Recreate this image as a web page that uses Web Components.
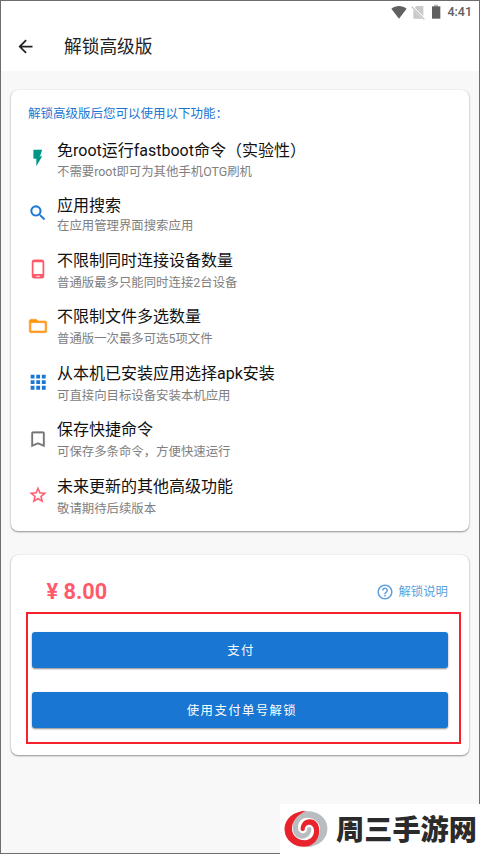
<!DOCTYPE html>
<html lang="zh-CN"><head><meta charset="utf-8"><title>解锁高级版</title>
<style>html,body{margin:0;height:100%;overflow:hidden}body{font-family:Roboto,"Noto Sans CJK SC",sans-serif}</style></head>
<body><unlock-page></unlock-page>
<script>
const icons={
wifi:'<path fill="#606060" d="M12 22L.5 7.2C4 4.3 8 3 12 3s8 1.3 11.500 4.200z"/>',
nosim:'<path fill="#c9c9c9" d="M10 3h10v15.500L7.200 5.700zM5 8.200V22h13.800z"/><path stroke="#bdbdbd" stroke-width="1.800" d="M2.500 4l19 19"/>',
battery:'<path fill="#bbb" d="M9 1h6v4H9z"/><path fill="#606060" d="M6 3.500h12.500V22H6z"/>',
back:'<path fill="#222" d="M20 11H7.830l5.590-5.590L12 4l-8 8 8 8 1.410-1.410L7.830 13H20v-2z"/>',
bolt:'<path fill="#009688" d="M6.500 2v11h3.500v9l7-12h-4V2z"/><path fill="#009688" d="M12 2h5l-2.500 8H12z"/>',
search:'<path fill="#1976d2" stroke="#1976d2" stroke-width=".3" d="M15.5 14h-.79l-.28-.27C15.41 12.59 16 11.11 16 9.5 16 5.91 13.09 3 9.5 3S3 5.91 3 9.5 5.91 16 9.5 16c1.61 0 3.09-.59 4.23-1.57l.27.28v.79l5 4.99L20.49 19l-4.99-5zm-6 0C7.01 14 5 11.99 5 9.5S7.01 5 9.5 5 14 7.01 14 9.5 11.99 14 9.5 14z"/>',
phone:'<path fill="#ff5a6b" fill-rule="evenodd" d="M7.500 .5h9a3 3 0 0 1 3 3v17a3 3 0 0 1-3 3h-9a3 3 0 0 1-3-3v-17a3 3 0 0 1 3-3zM6.600 4v14h10.800V4zM10 20v1.200h4V20z"/>',
folder:'<path fill="#ff9800" stroke="#ff9d3a" stroke-width=".8" d="M20.500 6H12l-2-2H3.500c-1.100 0-2 .9-2 2v12c0 1.100.9 2 2 2h17c1.100 0 2-.9 2-2V8c0-1.100-.9-2-2-2zm0 12h-17V8h17v10z"/>',
apps:'<path fill="#1976d2" d="M3.200 3.200h4.600v4.600H3.200zm6.700 0h4.600v4.600H9.900zm6.700 0h4.600v4.600h-4.600zM3.200 9.900h4.600v4.600H3.200zm6.700 0h4.600v4.600H9.900zm6.700 0h4.600v4.600h-4.600zM3.200 16.600h4.600v4.600H3.200zm6.700 0h4.600v4.600H9.900zm6.700 0h4.600v4.600h-4.600z"/>',
bookmark:'<path fill="#757575" stroke="#757575" stroke-width=".3" d="M18 3H6c-1.100 0-2 .9-2 2v16.500l8-3.200 8 3.200V5c0-1.100-.9-2-2-2zm0 15.500l-6-2.400-6 2.400V5h12z"/>',
star:'<path fill="#ff5a6b" stroke="#ff5a6b" stroke-width=".3" d="M22 9.240l-7.190-.62L12 2 9.190 8.630 2 9.240l5.460 4.730L5.820 21 12 17.270 18.180 21l-1.630-7.030L22 9.240zM12 15.400l-3.760 2.270 1-4.280-3.320-2.880 4.380-.38L12 6.100l1.710 4.040 4.380.38-3.320 2.880 1 4.280L12 15.400z"/>',
help:'<path fill="#5e9fe0" d="M11 18h2v-2h-2v2zm1-16C6.48 2 2 6.48 2 12s4.480 10 10 10 10-4.480 10-10S17.520 2 12 2zm0 18c-4.410 0-8-3.590-8-8s3.590-8 8-8 8 3.590 8 8-3.590 8-8 8zm0-14c-2.210 0-4 1.790-4 4h2c0-1.100.9-2 2-2s2 .9 2 2c0 2-3 1.750-3 5h2c0-2.250 3-2.500 3-5 0-2.210-1.790-4-4-4z"/>'};
function define(name,render){customElements.define(name,class extends HTMLElement{connectedCallback(){if(!this.shadowRoot)this.attachShadow({mode:'open'}).innerHTML=render(this)}})}
define('app-icon',e=>`<style>:host{display:block;flex:none;width:${e.getAttribute('size')||20}px;height:${e.getAttribute('size')||20}px}svg{display:block;width:100%;height:100%}</style><svg viewBox="0 0 24 24">${icons[e.getAttribute('name')]}</svg>`);
define('status-bar',()=>`<style>:host{display:flex;height:21px;align-items:center;justify-content:flex-end;padding-right:7px;box-sizing:border-box;color:#606060;font:500 12.5px/20px Roboto}span{margin-left:3px}.s{margin-left:3px}.b{margin-left:2px}</style><app-icon name="wifi" size="16"></app-icon><app-icon class="s" name="nosim" size="16"></app-icon><app-icon class="b" name="battery" size="16"></app-icon><span>4:41</span>`);
define('app-bar',()=>`<style>:host{display:flex;height:46px;align-items:center;padding:2px 0 0 13.5px;color:#222;font-size:17.7px;line-height:24px}app-icon{margin-top:-2px}span{margin-left:28.5px}</style><app-icon name="back" size="21"></app-icon><span><slot></slot></span>`);
define('surface-card',()=>`<style>:host{display:block;box-sizing:border-box;background:#fff;border-radius:7px;box-shadow:0 1px 2px #0006,0 0 1px #0003}</style><slot></slot>`);
define('feature-row',e=>`<style>:host{display:flex;align-items:flex-start;height:${e.getAttribute('h')||56.5}px}app-icon{margin:${e.getAttribute('icon-top')}px 9.5px 0 -.5px}div div{font-size:16px;line-height:20px;color:#111;white-space:nowrap}p{margin:${e.getAttribute('gap')||3}px 0 0;font-size:12.4px;line-height:18px;color:#808080;white-space:nowrap}</style><app-icon name="${e.getAttribute('icon')}"></app-icon><div><div><slot></slot></div><p><slot name="sub"></slot></p></div>`);
define('pay-button',()=>`<style>:host{display:flex;height:36px;align-items:center;justify-content:center;padding-left:2px;border-radius:3px;background:#1976d2;color:#fff;font-size:12.4px;letter-spacing:1.4px;box-shadow:0 1px 2px #0007}</style><slot></slot>`);
define('brand-mark',()=>`<style>:host{display:flex;align-items:center;width:200px;height:50px;background:#fff;color:#2b2b2b;font:900 28.2px/40px "Noto Sans CJK SC",sans-serif;white-space:nowrap}svg{flex:none;margin-right:2px}span{margin-top:-3px}</style><svg width="54" height="50" viewBox="0 0 162 150"><defs><path id="swirl" d="M80 20C35 22 12 48 14 80C16 110 45 130 75 128C100 126 118 105 118 80C118 60 106 46 90 46C72 46 61 60 62 78Q68 84 74 78C74 67 82 60 92 63C99 66 103 73 102 82C101 98 90 109 75 109C50 109 34 92 36 70C38 48 55 30 80 20"/></defs><use href="#swirl" fill="#b9bdc0" transform="rotate(180 78 75)"/><use href="#swirl" fill="#e9232b"/></svg><span>周三手游网</span>`);
define('unlock-page',()=>`<style>
:host{display:block;position:relative;width:480px;height:854px;box-sizing:border-box;border:1px solid #706c6c;background:#f8f8f8}
header{background:#fff;height:70px}main{padding:19px 10px 0}
.features{height:441px;padding:15px 17px 0 17px}h2{margin:0 0 18px;font-weight:400;font-size:12.500px;line-height:18px;color:#1976d2}
.pay{height:200px;margin-top:24px;padding:25px 16px 0 15px}.top{display:flex;align-items:center;justify-content:space-between;height:24px;padding:0 5px 0 20.500px}.price{font:700 21.700px/24px Roboto;color:#ff5a6b}.help{display:flex;align-items:center;gap:4px;font-size:12.400px;line-height:18px;color:#5e9fe0}
.actions{box-sizing:border-box;height:132px;margin-top:8px;margin-right:-8px;border:2px solid #f5222d;padding:18px 11px 0 4px}.actions pay-button+pay-button{margin-top:24px}.actions pay-button:last-child{padding-left:4px}
brand-mark{position:absolute;right:-1px;bottom:-1px}
</style><header><status-bar></status-bar><app-bar>解锁高级版</app-bar></header><main>
<surface-card class="features"><h2>解锁高级版后您可以使用以下功能：</h2>
<feature-row icon="bolt" h="54.5" gap="1.5" icon-top="7">免root运行fastboot命令（实验性）<span slot="sub">不需要root即可为其他手机OTG刷机</span></feature-row>
<feature-row icon="search" h="55" gap="1.5" icon-top="7.5">应用搜索<span slot="sub">在应用管理界面搜索应用</span></feature-row>
<feature-row icon="phone" icon-top="8.5">不限制同时连接设备数量<span slot="sub">普通版最多只能同时连接2台设备</span></feature-row>
<feature-row icon="folder" icon-top="8.5">不限制文件多选数量<span slot="sub">普通版一次最多可选5项文件</span></feature-row>
<feature-row icon="apps" icon-top="8.5">从本机已安装应用选择apk安装<span slot="sub">可直接向目标设备安装本机应用</span></feature-row>
<feature-row icon="bookmark" icon-top="8.5">保存快捷命令<span slot="sub">可保存多条命令，方便快速运行</span></feature-row>
<feature-row icon="star" icon-top="8.5">未来更新的其他高级功能<span slot="sub">敬请期待后续版本</span></feature-row></surface-card>
<surface-card class="pay"><div class="top"><span class="price">¥ 8.00</span><span class="help"><app-icon name="help" size="18"></app-icon>解锁说明</span></div>
<div class="actions"><pay-button>支付</pay-button><pay-button>使用支付单号解锁</pay-button></div></surface-card></main><brand-mark></brand-mark>`);
</script></body></html>
